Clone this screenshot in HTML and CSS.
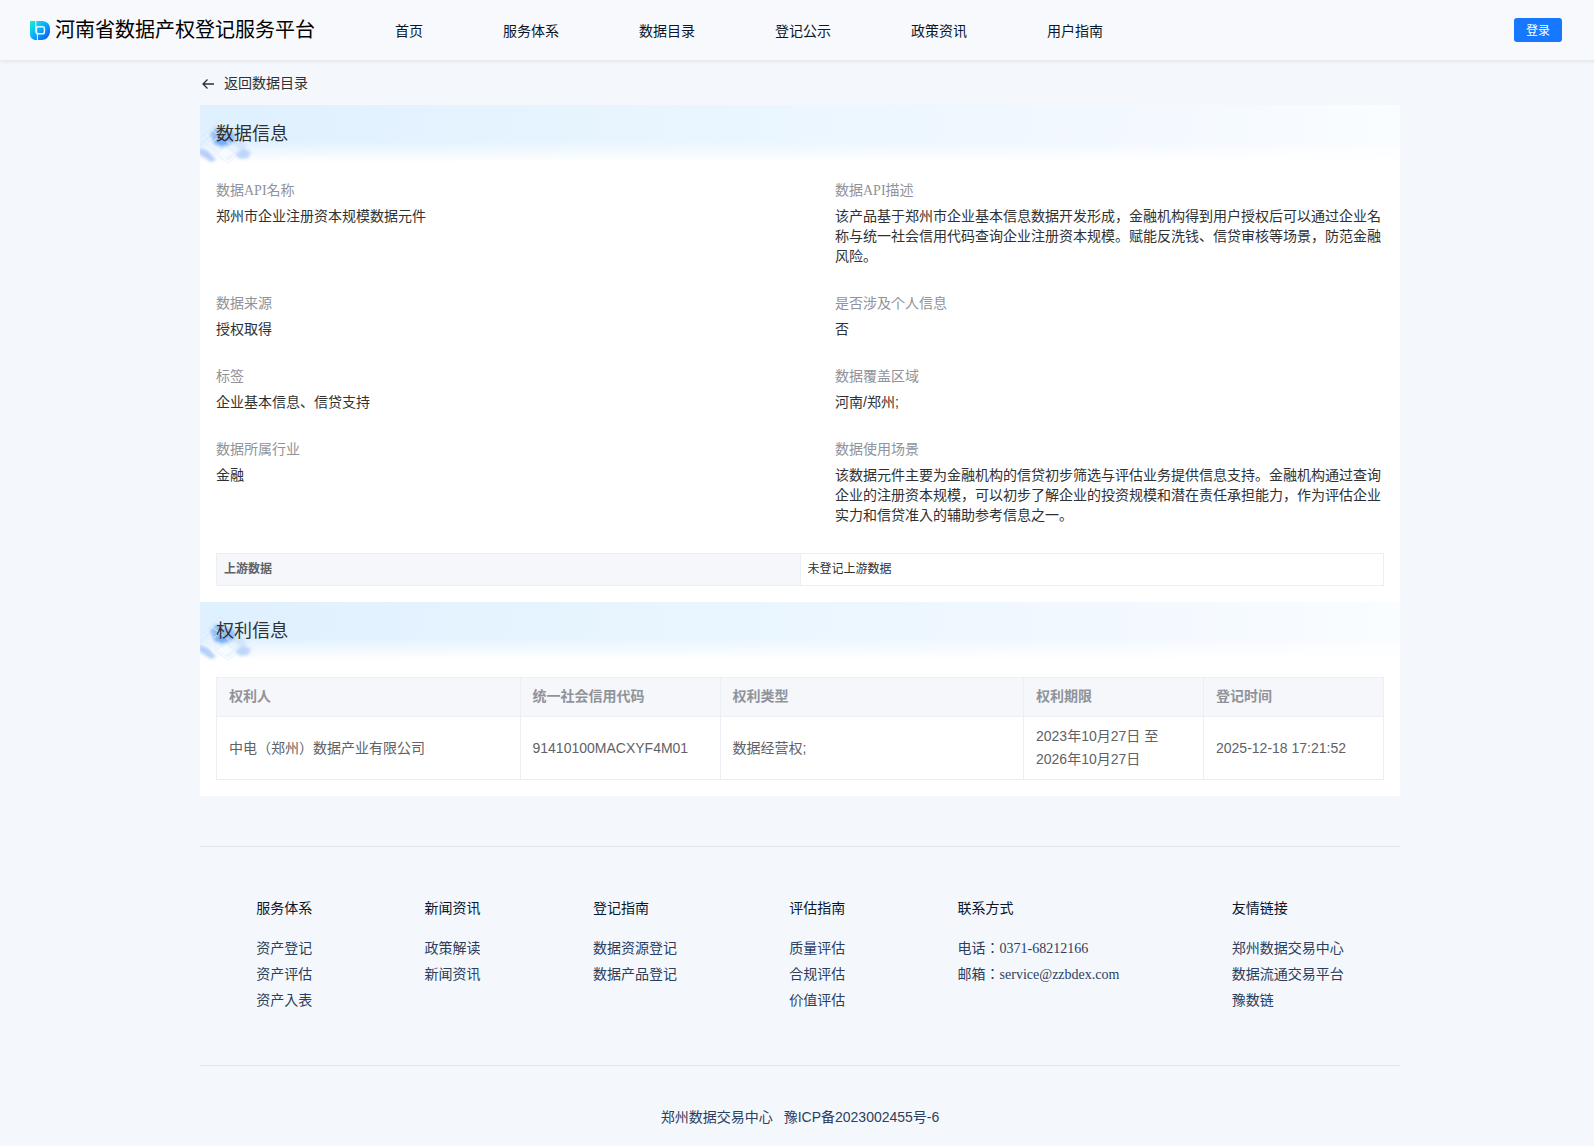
FILE: index.html
```html
<!DOCTYPE html>
<html lang="en">

<head>
    <meta charset="UTF-8">
    <meta name="viewport" content="width=device-width, initial-scale=1.0">
    <title>河南省数据产权登记服务平台</title>
    <link rel="stylesheet" href="styles.css">
</head>

<body>
    <!-- 公用图形 -->
    <svg class="sprite" aria-hidden="true">
        <defs>
            <filter id="soft" x="-20%" y="-20%" width="140%" height="140%">
                <feGaussianBlur stdDeviation="1.5" />
            </filter>
            <symbol id="cubes" viewBox="0 0 56 60">
                <path d="M0 34 20 15 46 38 28 56Z" fill="#e6f2fe" opacity=".7" />
                <g fill="none" stroke="#c9dff8" stroke-width=".8">
                    <path d="M3 31 20 15 38 31M0 40 22 20 46 42" stroke-dasharray="2 1" />
                    <path d="M14 48 28 58 50 40" stroke="#e3eefc" />
                </g>
                <g filter="url(#soft)">
                    <path d="M10 29 16 22 24 25 34 27 36 36 27 41 15 40Z" fill="#94c1f8" />
                    <path d="M15 37 22 32 29 36 22 42Z" fill="#74adf6" />
                    <path d="M-1 43 8 46 16 55 11 57-1 49Z" fill="#b5cff8" />
                    <path d="M35 49 43 43 51 47 48 53 40 54Z" fill="#bfd6fa" />
                    <path d="M32 38 42 34 47 41 40 44Z" fill="#d3e5fc" />
                </g>
                <path d="M18 48 26 43 33 48 25 54Z" fill="#fff" opacity=".6" />
                <path d="M4 42 20 54M9 38 26 51M12 25 30 39M26 24 14 36" stroke="#fff" stroke-width=".8" opacity=".7" fill="none" />
            </symbol>
        </defs>
    </svg>

    <div class="header">
        <div class="logo">
            <svg class="logo-icon" viewBox="0 0 20 20" aria-hidden="true">
                <defs>
                    <linearGradient id="lg" x1="0" y1="0" x2="1" y2="1">
                        <stop offset="0" stop-color="#1bf0d2" />
                        <stop offset=".45" stop-color="#08b2fb" />
                        <stop offset="1" stop-color="#0a4cf6" />
                    </linearGradient>
                </defs>
                <path d="M0 1H13Q20 2 20 9V12Q19 19 12 20H5Q0 19 0 14Z" fill="url(#lg)" />
                <g fill="none" stroke="#e6f8ff">
                    <path d="M5.800 1V11Q5.800 13.800 8.500 13.800" stroke-width="1.200" />
                    <rect x="6.400" y="6.800" width="8" height="7" rx="1.800" stroke-width="1.500" />
                    <path d="M7.400 13.500V20" stroke-width="1" />
                </g>
            </svg>
            <span>河南省数据产权登记服务平台</span>
        </div>
        <div class="nav">
            <a href="#">首页</a>
            <a href="#">服务体系</a>
            <a href="#">数据目录</a>
            <a href="#">登记公示</a>
            <a href="#">政策资讯</a>
            <a href="#">用户指南</a>
        </div>
        <button class="login" type="button">登录</button>
    </div>

    <div class="container">
        <a class="back" href="#">
            <svg class="back-icon" viewBox="0 0 16 16" aria-hidden="true">
                <path d="M14 8H3M7.500 3.500 3 8l4.500 4.500" />
            </svg>
            <span>返回数据目录</span>
        </a>

        <div class="card">
            <!-- 数据信息 -->
            <div class="banner">
                <svg class="cubes" aria-hidden="true"><use href="#cubes" /></svg>
                <h2>数据信息</h2>
            </div>
            <dl class="info">
                <div>
                    <dt>数据API名称</dt>
                    <dd>郑州市企业注册资本规模数据元件</dd>
                </div>
                <div>
                    <dt>数据API描述</dt>
                    <dd>该产品基于郑州市企业基本信息数据开发形成，金融机构得到用户授权后可以通过企业名称与统一社会信用代码查询企业注册资本规模。赋能反洗钱、信贷审核等场景，防范金融风险。</dd>
                </div>
                <div>
                    <dt>数据来源</dt>
                    <dd>授权取得</dd>
                </div>
                <div>
                    <dt>是否涉及个人信息</dt>
                    <dd>否</dd>
                </div>
                <div>
                    <dt>标签</dt>
                    <dd>企业基本信息、信贷支持</dd>
                </div>
                <div>
                    <dt>数据覆盖区域</dt>
                    <dd>河南/郑州;</dd>
                </div>
                <div>
                    <dt>数据所属行业</dt>
                    <dd>金融</dd>
                </div>
                <div>
                    <dt>数据使用场景</dt>
                    <dd>该数据元件主要为金融机构的信贷初步筛选与评估业务提供信息支持。金融机构通过查询企业的注册资本规模，可以初步了解企业的投资规模和潜在责任承担能力，作为评估企业实力和信贷准入的辅助参考信息之一。</dd>
                </div>
            </dl>
            <table class="source">
                <tbody>
                    <tr>
                        <th scope="row">上游数据</th>
                        <td>未登记上游数据</td>
                    </tr>
                </tbody>
            </table>

            <!-- 权利信息 -->
            <div class="banner">
                <svg class="cubes" aria-hidden="true"><use href="#cubes" /></svg>
                <h2>权利信息</h2>
            </div>
            <table class="rights">
                <colgroup>
                    <col>
                    <col class="col-code">
                    <col>
                    <col class="col-date">
                    <col class="col-date">
                </colgroup>
                <thead>
                    <tr>
                        <th>权利人</th>
                        <th>统一社会信用代码</th>
                        <th>权利类型</th>
                        <th>权利期限</th>
                        <th>登记时间</th>
                    </tr>
                </thead>
                <tbody>
                    <tr>
                        <td>中电（郑州）数据产业有限公司</td>
                        <td>91410100MACXYF4M01</td>
                        <td>数据经营权;</td>
                        <td>2023年10月27日 至 2026年10月27日</td>
                        <td>2025-12-18 17:21:52</td>
                    </tr>
                </tbody>
            </table>
        </div>

        <div class="footer">
            <div class="links">
                <div>
                    <h3>服务体系</h3>
                    <a href="#">资产登记</a>
                    <a href="#">资产评估</a>
                    <a href="#">资产入表</a>
                </div>
                <div>
                    <h3>新闻资讯</h3>
                    <a href="#">政策解读</a>
                    <a href="#">新闻资讯</a>
                </div>
                <div>
                    <h3>登记指南</h3>
                    <a href="#">数据资源登记</a>
                    <a href="#">数据产品登记</a>
                </div>
                <div>
                    <h3>评估指南</h3>
                    <a href="#">质量评估</a>
                    <a href="#">合规评估</a>
                    <a href="#">价值评估</a>
                </div>
                <div>
                    <h3>联系方式</h3>
                    <p>电话：0371-68212166</p>
                    <p>邮箱：service@zzbdex.com</p>
                </div>
                <div>
                    <h3>友情链接</h3>
                    <a href="#">郑州数据交易中心</a>
                    <a href="#">数据流通交易平台</a>
                    <a href="#">豫数链</a>
                </div>
            </div>
            <div class="copyright">
                <span>郑州数据交易中心</span>
                <a href="#">豫ICP备2023002455号-6</a>
            </div>
        </div>
    </div>
</body>

</html>
```
FILE: styles.css
```css
* {
    margin: 0;
    padding: 0;
    box-sizing: border-box;
}

html {
    overflow-x: hidden;
}

body {
    min-width: 1600px;
    background-color: #f4f8fd;
    font-family: "Liberation Serif", "Noto Sans CJK JP", serif;
    font-size: 14px;
    line-height: 20px;
    color: #303133;
}

a {
    color: inherit;
    text-decoration: none;
}

.sprite {
    position: absolute;
    width: 0;
    height: 0;
}

/* 顶部导航 */
.header {
    display: flex;
    align-items: center;
    height: 60px;
    padding: 0 38px 0 30px;
    background-color: #f7f9fd;
    box-shadow: 0 1px 4px rgba(0, 21, 41, .1);
}

.logo {
    display: flex;
    align-items: center;
    gap: 5px;
    font-size: 20px;
    color: #000;
}

.logo-icon {
    width: 20px;
    height: 20px;
}

.nav {
    display: flex;
    gap: 80px;
    margin-left: 80px;
    padding-top: 4px;
    color: #0a1629;
}

.login {
    height: 24px;
    margin-left: auto;
    padding: 0 12px 2px;
    border: none;
    border-radius: 3px;
    background-color: #1677ff;
    font-family: "Liberation Sans", "Noto Sans CJK JP", sans-serif;
    font-size: 12px;
    color: #fff;
    cursor: pointer;
}

.container {
    width: 1200px;
    margin: 0 auto;
}

.back {
    display: inline-flex;
    align-items: center;
    gap: 8px;
    height: 45px;
    padding-top: 2px;
    vertical-align: top;
}

.back-icon {
    width: 16px;
    height: 16px;
    fill: none;
    stroke: #303133;
    stroke-width: 1.3;
}

/* 详情卡片 */
.card {
    padding-bottom: 16px;
    background-color: #fff;
}

.banner {
    position: relative;
    height: 60px;
    padding: 19px 16px;
    background: linear-gradient(rgba(255, 255, 255, 0) 60%, #fff 96%),
        linear-gradient(90deg, #dff0fe, #eaf6ff 45%, #f2f8ff 75%, #fafdff);
}

.banner h2 {
    position: relative;
    font-size: 18px;
    font-weight: 400;
}

.cubes {
    position: absolute;
    top: 0;
    left: 0;
    width: 56px;
    height: 60px;
}

.info {
    display: grid;
    grid-template-columns: 1fr 1fr;
    gap: 28px 70px;
    padding: 16px 16px 28px;
}

.info dt {
    margin-bottom: 5px;
    color: #909399;
}

.info dd,
.source,
.rights,
.copyright {
    font-family: "Liberation Sans", "Noto Sans CJK JP", sans-serif;
}

.source,
.rights {
    width: calc(100% - 32px);
    margin: 0 16px;
    border-collapse: collapse;
    table-layout: fixed;
    text-align: left;
}

th,
td {
    border: 1px solid #ebeef5;
}

th {
    background-color: #f5f7fa;
}

.source {
    margin-bottom: 16px;
    font-size: 12px;
}

.source th,
.source td {
    padding: 5px 7px 6px;
}

.source th {
    color: #606266;
}

.rights {
    margin-top: 15px;
    line-height: 23px;
    color: #606266;
}

.rights th,
.rights td {
    padding: 8px 12px;
}

.rights th {
    padding: 7px 12px 8px;
    color: #909399;
}

.col-code {
    width: 200px;
}

.col-date {
    width: 180px;
}

/* 页脚 */
.footer {
    margin-top: 50px;
    border-top: 1px solid #e1e6ed;
    color: #2c3e5d;
}

.links {
    display: flex;
    justify-content: space-around;
    padding: 52px 0 48px;
    border-bottom: 1px solid #e1e6ed;
}

.links h3 {
    margin-bottom: 20px;
    font-size: 14px;
    font-weight: 400;
    color: #0a1629;
}

.links a,
.links p {
    display: block;
    margin-bottom: 6px;
}

.copyright {
    display: flex;
    justify-content: center;
    gap: 11px;
    padding: 41px 0 19px;
}
```
